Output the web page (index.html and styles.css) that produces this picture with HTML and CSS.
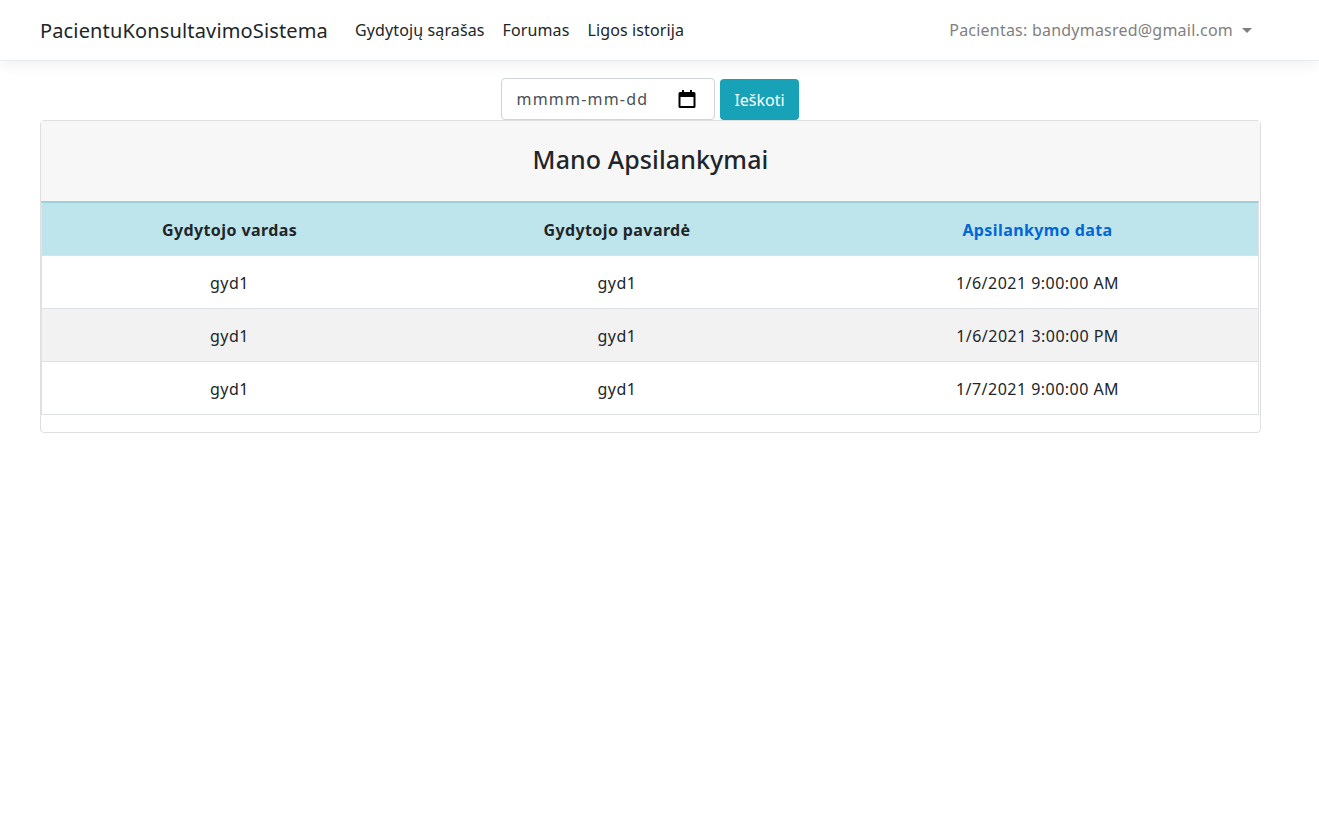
FILE: index.html
```html
<!DOCTYPE html>
<html lang="en">
<head>
  <meta charset="UTF-8">
  <title>Mano Apsilankymai</title>
  <link rel="stylesheet" href="styles.css">
</head>
<body>
  <nav class="navbar">
    <a class="brand" href="#">PacientuKonsultavimoSistema</a>
    <ul class="nav-links">
      <li><a href="#">Gydytojų sąrašas</a></li>
      <li><a href="#">Forumas</a></li>
      <li><a href="#">Ligos istorija</a></li>
    </ul>
    <a class="user-menu" href="#">Pacientas: bandymasred@gmail.com<span class="caret"></span></a>
  </nav>
  <div class="container">
    <form class="search">
      <div class="date-input">
        <span class="date-text">mmmm-mm-dd</span>
        <svg class="cal-icon" width="20" height="20" viewBox="0 0 20 20">
          <path fill="#000" d="M5 1h2v2h6V1h2v2h2a1.500 1.500 0 0 1 1.500 1.500v13A1.500 1.500 0 0 1 17 19H3a1.500 1.500 0 0 1-1.500-1.500v-13A1.500 1.500 0 0 1 3 3h2zM3.500 8v9h13V8z"/>
        </svg>
      </div>
      <button class="btn" type="button">Ieškoti</button>
    </form>
    <div class="card">
      <h2 class="card-header">Mano Apsilankymai</h2>
      <div class="card-body">
        <table class="visits">
          <thead>
            <tr>
              <th>Gydytojo vardas</th>
              <th>Gydytojo pavardė</th>
              <th class="sorted"><a href="#">Apsilankymo data</a></th>
            </tr>
          </thead>
          <tbody>
            <tr><td>gyd1</td><td>gyd1</td><td>1/6/2021 9:00:00 AM</td></tr>
            <tr class="odd"><td>gyd1</td><td>gyd1</td><td>1/6/2021 3:00:00 PM</td></tr>
            <tr><td>gyd1</td><td>gyd1</td><td>1/7/2021 9:00:00 AM</td></tr>
          </tbody>
        </table>
      </div>
    </div>
  </div>
</body>
</html>
```

FILE: styles.css
```css
* {
  box-sizing: border-box;
}
body {
  margin: 0;
  font-family: "Noto Sans", "Open Sans", sans-serif;
  font-size: 16px;
  color: #212529;
  background: #fff;
}
a {
  color: inherit;
  text-decoration: none;
}
.navbar {
  display: flex;
  align-items: center;
  height: 61px;
  padding: 0 40px;
  background: #fff;
  border-bottom: 1px solid #e9ecef;
  box-shadow: 0 4px 14px rgba(0,0,0,.06);
}
.brand {
  font-size: 20px;
  letter-spacing: .15px;
  margin-right: 18px;
}
.nav-links {
  display: flex;
  gap: 18px;
  list-style: none;
  margin: 0;
  padding: 0 0 0 9px;
  letter-spacing: .12px;
}
.user-menu {
  margin-left: auto;
  margin-right: 27px;
  color: #7f7f7f;
  letter-spacing: .22px;
}
.caret {
  display: inline-block;
  margin-left: 9px;
  vertical-align: 3px;
  border-top: 5px solid #7f7f7f;
  border-left: 5px solid transparent;
  border-right: 5px solid transparent;
}
.container {
  padding: 17px 58px 0 40px;
}
.search {
  display: flex;
  justify-content: center;
  gap: 5px;
  height: 42px;
  margin-right: 2px;
}
.date-input {
  display: flex;
  align-items: center;
  justify-content: space-between;
  width: 214px;
  height: 42px;
  padding: 0 17px 0 15px;
  border: 1px solid #ced4da;
  border-radius: 4px;
  color: #495057;
  letter-spacing: 1.2px;
}
.cal-icon {
  display: block;
}
.btn {
  width: 79px;
  height: 41px;
  margin-top: 1px;
  padding: 0 0 0 1px;
  border: 0;
  border-radius: 4px;
  background: #17a2b8;
  color: #fff;
  font: inherit;
}
.card {
  border: 1px solid #dfdfdf;
  border-radius: 4px;
  padding-bottom: 17px;
}
.card-header {
  margin: 0;
  height: 80px;
  line-height: 77px;
  text-align: center;
  font-size: 25px;
  font-weight: 500;
  letter-spacing: .1px;
  background: #f7f7f7;
}
.card-body {
  padding-right: 1px;
}
.visits {
  width: 100%;
  border-collapse: separate;
  border-spacing: 0;
  text-align: center;
  table-layout: fixed;
}
.visits th, .visits td {
  border-bottom: 1px solid #dee2e6;
}
.visits tr > :first-child {
  border-left: 1px solid #dee2e6;
}
.visits tr > :last-child {
  border-right: 1px solid #dee2e6;
}
.visits th {
  height: 55px;
  padding: 1px 0 0;
  font-weight: 700;
  letter-spacing: .4px;
  background: #bee5eb;
  border-top: 2px solid #9fcfda;
}
.visits td {
  height: 53px;
  padding: 1px 0 0;
  letter-spacing: .47px;
}
.visits th:nth-child(1) { width: 376px; }
.visits th:nth-child(2) { width: 400px; }
.visits .sorted a {
  color: #0366d6;
}
.visits .odd {
  background: #f2f2f2;
}
```
